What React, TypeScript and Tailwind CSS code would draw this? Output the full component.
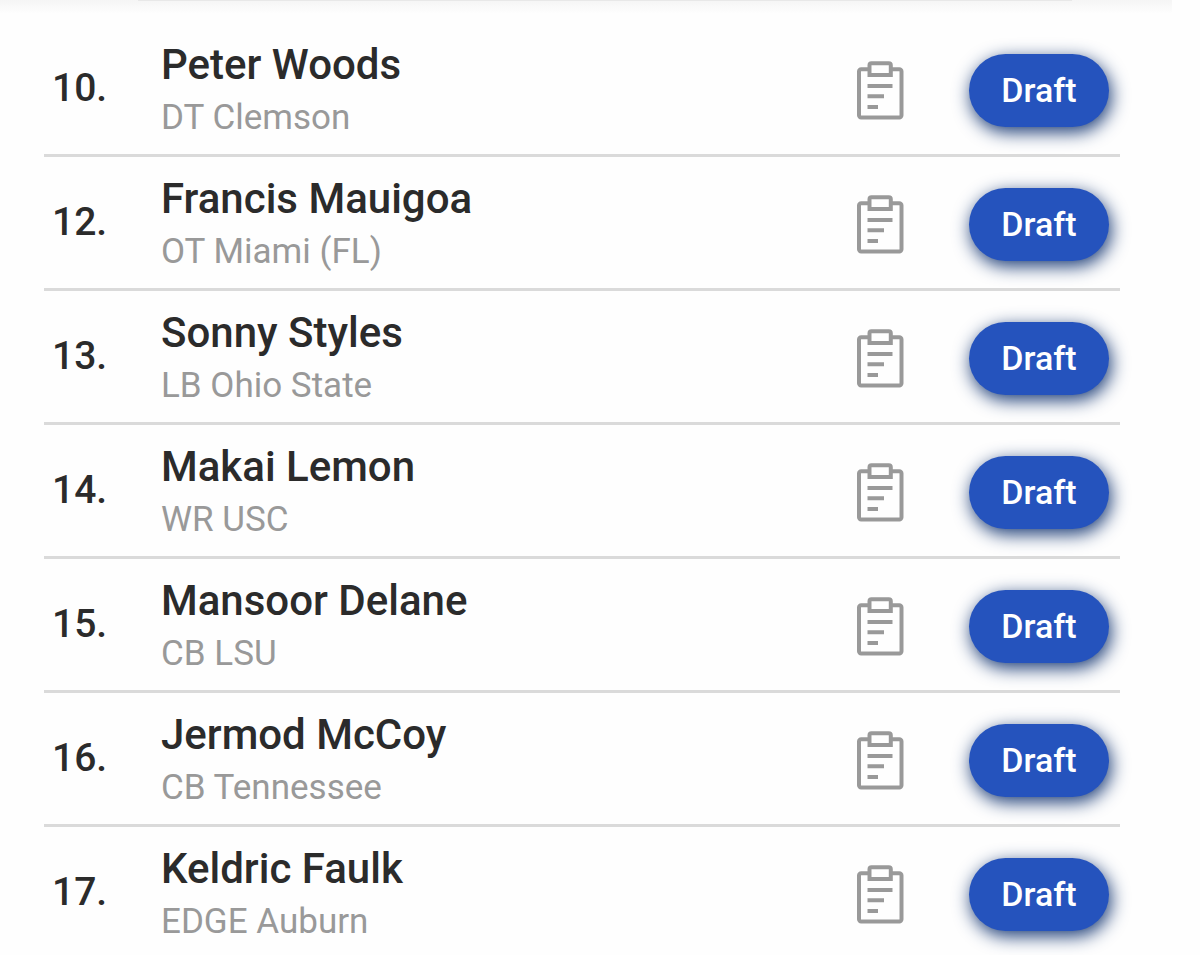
type Player = { rank: number; name: string; position: string; school: string };

const players: Player[] = [
  { rank: 10, name: "Peter Woods", position: "DT", school: "Clemson" },
  { rank: 12, name: "Francis Mauigoa", position: "OT", school: "Miami (FL)" },
  { rank: 13, name: "Sonny Styles", position: "LB", school: "Ohio State" },
  { rank: 14, name: "Makai Lemon", position: "WR", school: "USC" },
  { rank: 15, name: "Mansoor Delane", position: "CB", school: "LSU" },
  { rank: 16, name: "Jermod McCoy", position: "CB", school: "Tennessee" },
  { rank: 17, name: "Keldric Faulk", position: "EDGE", school: "Auburn" },
];

function ClipboardIcon() {
  return (
    <svg width="48" height="60" viewBox="0 0 48 60" fill="none" stroke="#999999" strokeWidth="4" aria-hidden="true">
      <path d="M12 8.3H4.2a2.2 2.2 0 0 0-2.2 2.2v43.8a2.2 2.2 0 0 0 2.2 2.2h38.1a2.2 2.2 0 0 0 2.2-2.2V10.5a2.2 2.2 0 0 0-2.2-2.2H34" />
      <path d="M12.5 14V4.2a2 2 0 0 1 2-2h17.3a2 2 0 0 1 2 2V14z" />
      <path d="M10.5 25H35.5M10.5 35.3H27M10.5 46H21" />
    </svg>
  );
}

function PlayerRow({ player }: { player: Player }) {
  return (
    <li className="flex h-[134px] items-center border-b-3 border-[#dadada] pr-[11px] pl-2 last:border-transparent">
      <span className="w-[109px] shrink-0 pb-0.5 text-[39px] leading-[48px] font-medium">{player.rank}.</span>
      <div className="min-w-0 flex-1 pt-1.5">
        <h2 className="text-[42px] leading-[52px] font-medium">{player.name}</h2>
        <p className="text-[35px] leading-[54px] text-[#999999]">
          {player.position} {player.school}
        </p>
      </div>
      <div className="flex items-center gap-16 pt-1">
        <button type="button" aria-label={`Notes on ${player.name}`}>
          <ClipboardIcon />
        </button>
        <button
          type="button"
          className="h-[73px] w-[140px] rounded-full bg-[#2553bd] pb-px text-[34px] font-medium text-white shadow-[2px_5px_18px_#173873]"
        >
          Draft
        </button>
      </div>
    </li>
  );
}

export default function App() {
  return (
    <main className="overflow-hidden bg-[#fefefe] font-[Roboto,sans-serif] text-[#2b2b2b]">
      <div className="mr-7 h-[23px] bg-linear-to-b from-[#f5f5f5] to-[#fefefe] to-60%">
        <div className="mr-[100px] ml-[138px] h-px bg-[#e8e8e8]" />
      </div>
      <ul className="mr-20 ml-11">
        {players.map((player) => (
          <PlayerRow key={player.rank} player={player} />
        ))}
      </ul>
    </main>
  );
}
